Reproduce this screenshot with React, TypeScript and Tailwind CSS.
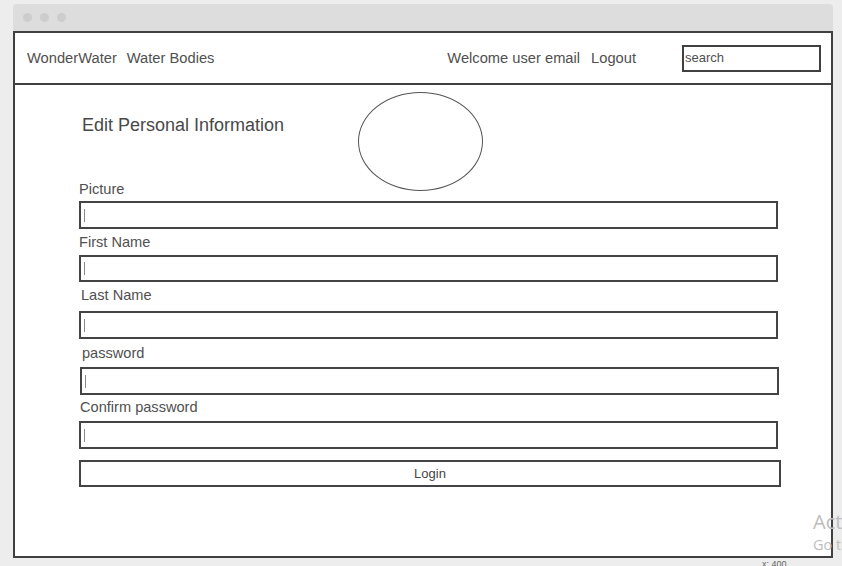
const fields = [
  { label: 'Picture', labelTop: 'mt-0', labelX: 'pl-0', gap: 'mt-[2px]', h: 'h-[28px]', x: 'ml-0' },
  { label: 'First Name', labelTop: 'mt-[3px]', labelX: 'pl-0', gap: 'mt-[3px]', h: 'h-[27px]', x: 'ml-0' },
  { label: 'Last Name', labelTop: 'mt-[3px]', labelX: 'pl-[2px]', gap: 'mt-[6px]', h: 'h-[28px]', x: 'ml-0' },
  { label: 'password', labelTop: 'mt-[4px]', labelX: 'pl-[3px]', gap: 'mt-[4px]', h: 'h-[28px]', x: 'ml-[1px]' },
  { label: 'Confirm password', labelTop: 'mt-[2px]', labelX: 'pl-[1px]', gap: 'mt-[4px]', h: 'h-[28px]', x: 'ml-0' },
];

const App = () => {
  return (
    <div className="relative h-[566px] w-[842px] overflow-hidden bg-[#ededed] font-['Liberation_Sans',Arial,sans-serif] text-[#505050]">
      <div className="ml-[13px] mt-[4px] w-[820px]">
        {/* window chrome */}
        <div className="flex h-[27px] items-center gap-[8px] rounded-t-[4px] bg-[#dddddd] pl-[10px]">
          <span className="h-[9px] w-[9px] rounded-full bg-[#cdcdcd]" />
          <span className="h-[9px] w-[9px] rounded-full bg-[#cdcdcd]" />
          <span className="h-[9px] w-[9px] rounded-full bg-[#cdcdcd]" />
        </div>

        <div className="h-[527px] border-2 border-[#404040] bg-white">
          {/* header */}
          <div className="flex h-[52px] items-center justify-between border-b-2 border-[#404040] pl-[12px] pr-[10px] text-[14.7px]">
            <div className="flex items-center gap-[10px]">
              <span>WonderWater</span>
              <span>Water Bodies</span>
            </div>
            <div className="flex items-center">
              <span>Welcome user email</span>
              <span className="ml-[11px]">Logout</span>
              <div className="ml-[46px] flex h-[27px] w-[139px] items-center border-2 border-[#404040] pl-[1px] text-[13px]">
                search
              </div>
            </div>
          </div>

          {/* body */}
          <div className="pl-[64px] pt-[7px]">
            <div className="flex h-[87px] items-start">
              <div className="w-[279px] pl-[3px] pt-[23px] text-[18px] leading-[20px] text-[#484848]">
                Edit Personal Information
              </div>
              <div className="h-[99px] w-[125px] shrink-0 rounded-[50%] border border-[#555]" />
            </div>

            {fields.map((f) => (
              <div key={f.label}>
                <div className={`${f.labelTop} ${f.labelX} h-[20px] text-[14.6px] leading-[20px]`}>{f.label}</div>
                <div className={`${f.gap} ${f.h} ${f.x} flex w-[699px] items-center border-2 border-[#444] pl-[3px]`}>
                  <span className="h-[13px] w-px bg-[#888]" />
                </div>
              </div>
            ))}

            <div className="mt-[11px] flex h-[27px] w-[702px] items-center justify-center border-2 border-[#444] text-[13px] text-[#444]">
              Login
            </div>
          </div>
        </div>
      </div>

      <div className="absolute left-[762px] top-[559px] text-[9px] leading-[10px] text-[#666]">x: 400</div>

      {/* windows activation watermark */}
      <div className="absolute left-[813px] top-[509px] whitespace-nowrap font-['Open_Sans',sans-serif] text-[#bdbdbd]">
        <div className="text-[20px] leading-[26px]">Activate Windows</div>
        <div className="text-[14.5px] leading-[20px]">Go to Settings to activate Windows.</div>
      </div>
    </div>
  );
};

export default App;
